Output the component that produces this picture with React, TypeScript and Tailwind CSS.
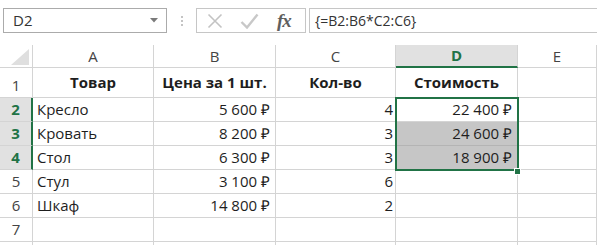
import React from "react";

const green = "text-[#217346]";

type Row = { n: string; a: string; b: string; c: string; d: string; sel?: boolean; gray?: boolean };

const data: Row[] = [
  { n: "2", a: "Кресло", b: "5 600 ₽", c: "4", d: "22 400 ₽", sel: true },
  { n: "3", a: "Кровать", b: "8 200 ₽", c: "3", d: "24 600 ₽", sel: true, gray: true },
  { n: "4", a: "Стол", b: "6 300 ₽", c: "3", d: "18 900 ₽", sel: true, gray: true },
  { n: "5", a: "Стул", b: "3 100 ₽", c: "6", d: "" },
  { n: "6", a: "Шкаф", b: "14 800 ₽", c: "2", d: "" },
  { n: "7", a: "", b: "", c: "", d: "" },
  // row 8 is only a sliver at the bottom edge
  { n: "", a: "", b: "", c: "", d: "" },
];

const cell = "border-r border-b border-[#d4d4d4] flex items-center overflow-hidden whitespace-nowrap";

function FormulaBar() {
  return (
    <div className="h-[45px] flex items-start pt-[8px] pl-[3px]">
      {/* name box */}
      <div className="w-[164px] h-[25px] border border-[#ababab] flex items-center pl-[9px] pr-[8px] text-[15px] text-[#333]">
        <span className="flex-1">D2</span>
        <svg width="8" height="5" viewBox="0 0 8 5">
          <path d="M0 0h8L4 4.5z" fill="#7a7a7a" />
        </svg>
      </div>
      <div className="w-[29px] h-[25px] flex flex-col items-center justify-center gap-[2px]">
        <span className="w-[2px] h-[2px] bg-[#c4c4c4]" />
        <span className="w-[2px] h-[2px] bg-[#c4c4c4]" />
        <span className="w-[2px] h-[2px] bg-[#c4c4c4]" />
      </div>
      {/* cancel / enter / fx */}
      <div className="w-[110px] h-[25px] border border-[#c6c6c6] flex items-center pl-[10px]">
        <svg width="16" height="16" viewBox="0 0 16 16">
          <path d="M1.5 1.5l13 13M14.5 1.5l-13 13" stroke="#c3c3c3" strokeWidth="1.6" fill="none" />
        </svg>
        <svg width="19" height="16" viewBox="0 0 19 16" className="ml-[17px]">
          <path d="M1.5 9l5.5 5.5L17.5 1.5" stroke="#c8c8c8" strokeWidth="2.4" fill="none" />
        </svg>
        <span className="ml-[18px] text-[19px] leading-none italic font-bold text-[#5f5f5f] font-['Liberation_Serif',serif] tracking-[-1px]">
          fx
        </span>
      </div>
      <div className="flex-1 ml-[3px] h-[25px] border border-[#c6c6c6] border-r-0 flex items-center pl-[5px] text-[14px] text-[#333]">
        {"{=B2:B6*C2:C6}"}
      </div>
    </div>
  );
}

export default function App() {
  return (
    <div className="w-[597px] h-[245px] overflow-hidden bg-white font-['Open_Sans',sans-serif] text-[#1e1e1e]">
      <FormulaBar />
      <div className="relative grid grid-cols-[33px_121px_122px_120px_122px_1fr] grid-rows-[23px_30px_24px_24px_24px_24px_24px_24px_24px]">
        {/* header row */}
        <div className={`${cell} relative`}>
          <svg width="18" height="16" viewBox="0 0 18 16" className="absolute right-[3px] bottom-[2px]">
            <path d="M18 0v16H0z" fill="#dfdfdf" />
          </svg>
        </div>
        {["A", "B", "C"].map((l) => (
          <div key={l} className={`${cell} justify-center text-[15px] text-[#444]`}>
            {l}
          </div>
        ))}
        <div className={`${cell} justify-center bg-[#e1e1e1] border-b-2 border-b-[#217346] text-[15px] font-bold ${green}`}>D</div>
        <div className={`${cell} justify-center text-[15px] text-[#444]`}>E</div>

        {/* row 1 */}
        <div className={`${cell} justify-center items-end pb-[1px] text-[15px] text-[#444]`}>1</div>
        <div className={`${cell} justify-center text-[15px] font-bold`}>Товар</div>
        <div className={`${cell} justify-center text-[15px] font-bold`}>Цена за 1 шт.</div>
        <div className={`${cell} justify-center text-[15px] font-bold`}>Кол-во</div>
        <div className={`${cell} justify-center text-[15px] font-bold`}>Стоимость</div>
        <div className={cell} />

        {data.map((r, i) => (
          <React.Fragment key={i}>
            <div
              className={`${cell} justify-center text-[15px] ${
                r.sel ? `bg-[#e1e1e1] font-bold border-r-2 border-r-[#217346] ${green}` : "text-[#444]"
              }`}
            >
              {r.n}
            </div>
            <div className={`${cell} pl-[4px] text-[15px]`}>{r.a}</div>
            <div className={`${cell} justify-end pr-[5px] text-[15px]`}>{r.b}</div>
            <div className={`${cell} justify-end pr-[2px] text-[15px]`}>{r.c}</div>
            <div className={`${cell} justify-end pr-[5px] text-[15px] ${r.gray ? "bg-[#c6c6c6] border-b-[#b4b4b4]" : ""}`}>
              {r.d}
            </div>
            <div className={cell} />
          </React.Fragment>
        ))}

        {/* selection outline over D2:D4 */}
        <div className="absolute left-[395px] top-[52px] w-[124px] h-[74px] border-2 border-[#217346] pointer-events-none" />
        <div className="absolute left-[514px] top-[123px] w-[7px] h-[7px] bg-[#217346] border border-white" />
      </div>
    </div>
  );
}
